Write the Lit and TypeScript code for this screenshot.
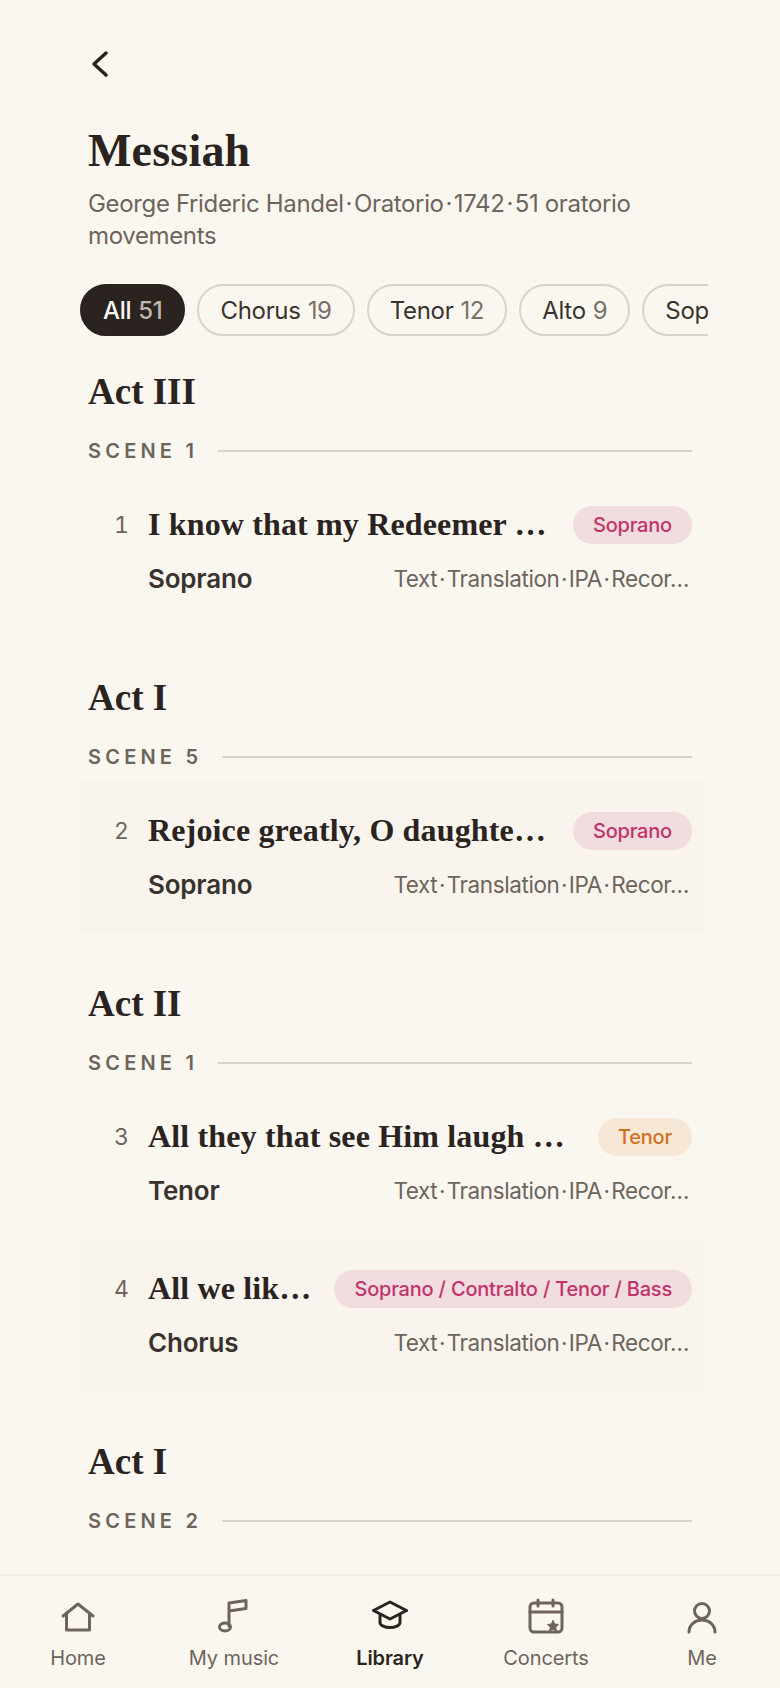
import { LitElement, html, css, svg } from 'lit';
import { customElement } from 'lit/decorators.js';

interface Row {
  n: number;
  title: string;
  part: string;
  tag: string;
  tagKind: 'rose' | 'amber';
  shaded?: boolean;
}

interface Section {
  act: string;
  scene: string;
  rows: Row[];
}

const sections: Section[] = [
  { act: 'Act III', scene: 'SCENE 1', rows: [
    { n: 1, title: 'I know that my Redeemer …', part: 'Soprano', tag: 'Soprano', tagKind: 'rose' },
  ] },
  { act: 'Act I', scene: 'SCENE 5', rows: [
    { n: 2, title: 'Rejoice greatly, O daughte…', part: 'Soprano', tag: 'Soprano', tagKind: 'rose', shaded: true },
  ] },
  { act: 'Act II', scene: 'SCENE 1', rows: [
    { n: 3, title: 'All they that see Him laugh …', part: 'Tenor', tag: 'Tenor', tagKind: 'amber' },
    { n: 4, title: 'All we lik…', part: 'Chorus', tag: 'Soprano / Contralto / Tenor / Bass', tagKind: 'rose', shaded: true },
  ] },
  { act: 'Act I', scene: 'SCENE 2', rows: [] },
];

const chips = [
  { label: 'All', count: '51', active: true },
  { label: 'Chorus', count: '19' },
  { label: 'Tenor', count: '12' },
  { label: 'Alto', count: '9' },
  { label: 'Soprano', count: '11' },
];

const tabs = [
  { label: 'Home', icon: svg`<path d="M3 18 18 6l15 12M6.500 15.500V32h23V15.500"/>` },
  { label: 'My music', icon: svg`<ellipse cx="9" cy="29" rx="5.500" ry="4"/><path d="M13 28V5l17-2.500v8L13 13"/>` },
  { label: 'Library', active: true, icon: svg`<path d="M18 4 34.500 12.500 18 21 1.500 12.500Z"/><path d="M8 17v7.500c0 3 5 5 10 5s10-2 10-5V17"/>` },
  { label: 'Concerts', icon: svg`<rect x="2" y="5" width="32" height="29" rx="4"/><path d="M10 2v6M25 2v6M2 14h32"/><path class="fill" d="m25 22.500 1.700 3.500 3.800.500-2.800 2.600.7 3.800-3.400-1.800-3.400 1.800.7-3.800-2.800-2.600 3.800-.500Z"/>` },
  { label: 'Me', icon: svg`<circle cx="18" cy="13" r="7.500"/><path d="M5 34c0-7 6-12 13-12s13 5 13 12"/>` },
];

// hair spaces round the dots, the separators sit tight against the words
const sub = 'George Frideric Handel\u200a·\u200aOratorio\u200a·\u200a1742\u200a·\u200a51 oratorio movements';
const meta = 'Text\u200a·\u200aTranslation\u200a·\u200aIPA\u200a·\u200aRecor…';

@customElement('app-root')
export class AppRoot extends LitElement {
  static styles = css`
    :host {
      display: flex;
      flex-direction: column;
      height: 1688px;
      overflow: hidden;
      background: #faf7f1;
      color: #2b2320;
      font-family: 'Inter', 'Noto Sans', sans-serif;
    }
    .page {
      flex: 1;
      min-height: 0;
      overflow: hidden;
      padding: 0 88px;
    }
    .back {
      display: block;
      margin: 48px 0 0;
      width: 24px;
      height: 32px;
      fill: none;
      stroke: #2b2320;
      stroke-width: 3.500;
      stroke-linecap: round;
      stroke-linejoin: round;
    }
    h1 {
      margin: 43px 0 0;
      font: 700 46px/56px 'Liberation Serif', serif;
      letter-spacing: 0.2px;
    }
    .sub {
      margin: 9px 0 0;
      font-size: 24px;
      line-height: 32px;
      letter-spacing: -0.35px;
      color: #6e645c;
    }
    .chips {
      display: flex;
      gap: 12px;
      margin: 32px -16px 0 -8px;
      overflow: hidden;
    }
    .chip {
      flex: none;
      height: 52px;
      box-sizing: border-box;
      padding: 0 21px;
      display: flex;
      align-items: center;
      gap: 7px;
      border: 2px solid #d8d3cb;
      border-radius: 26px;
      font-size: 24px;
      letter-spacing: -0.3px;
      color: #3a322d;
    }
    .chip span { color: #7a7068; }
    .chip.active {
      background: #2b2320;
      border-color: #2b2320;
      color: #faf7f1;
      font-weight: 500;
    }
    .chip.active span { color: #bfb7ae; }
    section { margin-top: 34px; }
    section + section { margin-top: 49px; }
    h2 {
      margin: 0;
      font: 700 37px/44px 'Liberation Serif', serif;
    }
    .scene {
      display: flex;
      align-items: center;
      gap: 20px;
      margin-top: 22px;
      font-size: 20px;
      line-height: 30px;
      font-weight: 600;
      letter-spacing: 4.200px;
      color: #6e645c;
    }
    .scene::after {
      content: '';
      flex: 1;
      height: 2px;
      background: #d8d3cb;
    }
    .row {
      height: 152px;
      box-sizing: border-box;
      margin: 9px 0 0 -8px;
      padding: 31px 0 0 8px;
    }
    .row + .row { margin-top: 0; }
    .row.shaded { background: #f9f5ee; margin-right: -12px; padding-right: 12px; }
    .top {
      display: flex;
      align-items: center;
      height: 38px;
    }
    .num {
      width: 60px;
      flex: none;
      box-sizing: border-box;
      padding: 0 19px 0 0;
      text-align: right;
      font-size: 23px;
      font-variant-numeric: tabular-nums;
      color: #6e645c;
    }
    .title {
      flex: 1;
      min-width: 0;
      margin-top: -2px;
      font: 700 32px/38px 'Liberation Serif', serif;
      letter-spacing: 0.15px;
      white-space: nowrap;
      overflow: hidden;
      text-overflow: ellipsis;
    }
    .tag {
      flex: none;
      margin-left: 20px;
      height: 38px;
      padding: 0 20px;
      display: flex;
      align-items: center;
      border-radius: 19px;
      font-size: 20px;
      font-weight: 500;
      letter-spacing: -0.2px;
    }
    .tag.rose { background: #f1dde0; color: #c2336a; }
    .tag.amber { background: #f7e7d6; color: #d4701c; }
    .bottom {
      display: flex;
      align-items: center;
      justify-content: space-between;
      margin: 19px 3px 0 60px;
    }
    .part {
      font-size: 26px;
      font-weight: 600;
      letter-spacing: -0.2px;
      color: #3a322d;
    }
    .meta {
      font-size: 22.500px;
      letter-spacing: -0.4px;
      color: #6e645c;
    }
    nav {
      flex: none;
      height: 112px;
      display: grid;
      grid-template-columns: repeat(5, 1fr);
      border-top: 2px solid #f3efe8;
      background: #faf7f1;
    }
    .tab {
      display: flex;
      flex-direction: column;
      align-items: center;
      padding-top: 22px;
      font-size: 20px;
      line-height: 30px;
      letter-spacing: -0.1px;
      color: #6e645c;
    }
    .tab svg {
      width: 36px;
      height: 36px;
      margin-bottom: 9px;
      fill: none;
      stroke: currentColor;
      stroke-width: 3;
      stroke-linejoin: round;
      stroke-linecap: round;
    }
    .tab svg .fill { fill: currentColor; stroke-width: 1; }
    .tab.active { color: #2b2320; font-weight: 600; }
  `;

  renderRow(r: Row) {
    return html`
      <div class="row ${r.shaded ? 'shaded' : ''}">
        <div class="top">
          <div class="num">${r.n}</div>
          <div class="title">${r.title}</div>
          <div class="tag ${r.tagKind}">${r.tag}</div>
        </div>
        <div class="bottom">
          <div class="part">${r.part}</div>
          <div class="meta">${meta}</div>
        </div>
      </div>
    `;
  }

  render() {
    return html`
      <div class="page">
        <svg class="back" viewBox="0 0 24 32"><path d="M18 5 6 16l12 11"/></svg>
        <h1>Messiah</h1>
        <p class="sub">${sub}</p>
        <div class="chips">
          ${chips.map(c => html`<div class="chip ${c.active ? 'active' : ''}">${c.label}<span>${c.count}</span></div>`)}
        </div>
        ${sections.map(s => html`
          <section>
            <h2>${s.act}</h2>
            <div class="scene">${s.scene}</div>
            ${s.rows.map(r => this.renderRow(r))}
          </section>
        `)}
      </div>
      <nav>
        ${tabs.map(t => html`
          <div class="tab ${t.active ? 'active' : ''}">
            <svg viewBox="0 0 36 36">${t.icon}</svg>
            ${t.label}
          </div>
        `)}
      </nav>
    `;
  }
}
